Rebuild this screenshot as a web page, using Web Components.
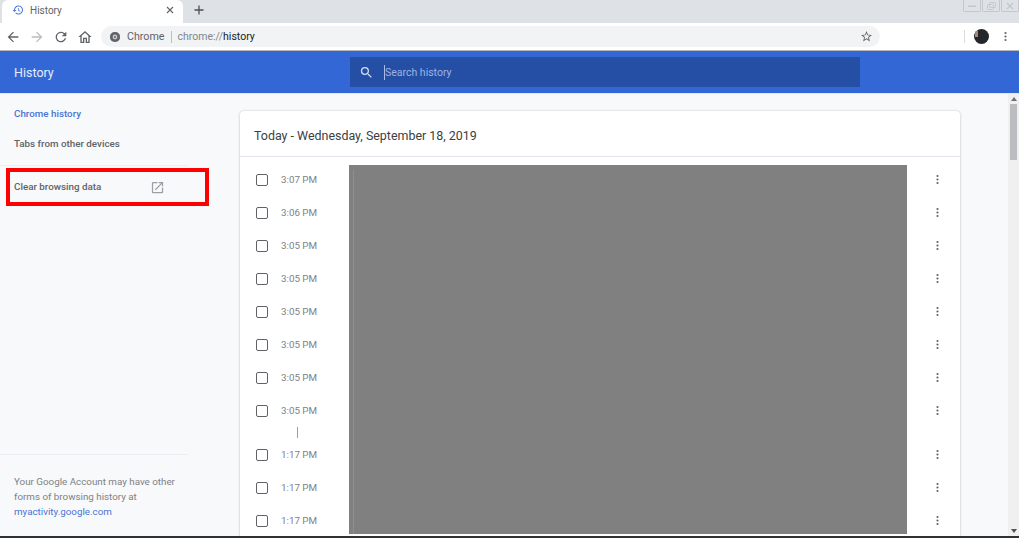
<!DOCTYPE html>
<html>
<head>
<meta charset="utf-8">
<title>History</title>
<style>
html, body { margin: 0; padding: 0; height: 100%; overflow: hidden; background: #fff; }
body { font-family: Roboto, "Liberation Sans", sans-serif; }
</style>
</head>
<body>
<history-page></history-page>

<script>
const ICONS = {
    history: '<path d="M13 3a9 9 0 0 0-9 9H1l4 4 4-4H6a7 7 0 1 1 2 4.9l-1.4 1.4A9 9 0 1 0 13 3zm-1 5v5l4.3 2.5.7-1.2-3.5-2.1V8z"/>',
    back: '<path d="M20 11H7.8l5.6-5.6L12 4l-8 8 8 8 1.4-1.4L7.8 13H20z"/>',
    forward: '<path d="M4 11h12.2l-5.6-5.6L12 4l8 8-8 8-1.4-1.4 5.6-5.6H4z"/>',
    reload: '<path d="M17.65 6.35A8 8 0 1 0 19.73 14h-2.08A6 6 0 1 1 12 6c1.66 0 3.14.69 4.22 1.78L13 11h7V4z"/>',
    home: '<path d="M12 3 2 12h3v9h6v-6h2v6h6v-9h3zm5 16h-2v-6H9v6H7v-8.8l5-4.5 5 4.5z"/>',
    star: '<path d="m22 9.2-7.2-.6L12 2 9.2 8.6 2 9.2l5.5 4.7L5.8 21l6.2-3.7 6.2 3.7-1.6-7.1zm-10 6-3.8 2.3 1-4.3-3.3-2.9 4.4-.4L12 5.9l1.7 4 4.4.4-3.3 2.9 1 4.3z"/>',
    search: '<path d="M15.5 14h-.79l-.28-.27A6.47 6.47 0 0 0 16 9.5 6.5 6.5 0 1 0 9.5 16c1.61 0 3.09-.59 4.23-1.57l.27.28v.79l5 4.99L20.49 19l-4.99-5zm-6 0C7.01 14 5 11.99 5 9.5S7.01 5 9.5 5 14 7.01 14 9.5 11.99 14 9.5 14z"/>',
    launch: '<path d="M19 19H5V5h7V3H5a2 2 0 0 0-2 2v14c0 1.1.9 2 2 2h14a2 2 0 0 0 2-2v-7h-2zM14 3v2h3.6l-9.8 9.8 1.4 1.4L19 6.4V10h2V3z"/>',
    more: '<circle cx="12" cy="5.5" r="2"/><circle cx="12" cy="12" r="2"/><circle cx="12" cy="18.5" r="2"/>'
};

function icon(name, size, color) {
    return `<svg xmlns="http://www.w3.org/2000/svg" width="${size}" height="${size}" viewBox="0 0 24 24" fill="${color}" style="display:block;flex:none">${ICONS[name]}</svg>`;
}

class BrowserTabstrip extends HTMLElement {
    constructor() {
        super();
        this.attachShadow({mode: 'open'});
        this.shadowRoot.innerHTML = `<style>
:host { display: flex; height: 23px; width: 1019px; background: #dee1e6; padding-left: 2px; box-sizing: border-box; position: relative; }
.tab { width: 181px; height: 23px; background: #fff; border-radius: 6px 6px 0 0; display: flex; align-items: center; padding: 0 9px 3px 10px; box-sizing: border-box; font-size: 10px; color: #5f6368; }
.tab span { flex: 1; margin-left: 6px; }
.plus { width: 32px; padding-bottom: 3px; box-sizing: border-box; display: flex; align-items: center; justify-content: center; }
.win { position: absolute; top: 0; right: 0; display: flex; gap: 1px; }
.win div { width: 18px; height: 12px; border: 1px solid #c4c7cb; border-top: 0; border-radius: 0 0 2px 2px; display: flex; align-items: center; justify-content: center; box-sizing: border-box; }
</style>
<div class="tab">
    ${icon('history', 12, '#4f78d8')}
    <span>History</span>
    <svg width="8" height="8" viewBox="0 0 8 8" stroke="#5f6368" stroke-width="1.1"><path d="M1 1l6 6M7 1L1 7"/></svg>
</div>
<div class="plus"><svg width="10" height="10" viewBox="0 0 10 10" stroke="#4d5156" stroke-width="1.3"><path d="M5 .5v9M.5 5h9"/></svg></div>
<div class="win">
    <div><svg width="8" height="4" viewBox="0 0 8 4" fill="#c4c7cb"><rect y="1.5" width="8" height="1.5"/></svg></div>
    <div><svg width="9" height="8" viewBox="0 0 9 8" fill="none" stroke="#c4c7cb"><rect x=".5" y="2.5" width="6" height="5" rx="1"/><rect x="2.5" y=".5" width="6" height="5" rx="1"/></svg></div>
    <div><svg width="8" height="8" viewBox="0 0 8 8" stroke="#c4c7cb" stroke-width="1.4"><path d="M1 1l6 6M7 1L1 7"/></svg></div>
</div>`;
    }
}

class BrowserToolbar extends HTMLElement {
    constructor() {
        super();
        this.attachShadow({mode: 'open'});
        this.shadowRoot.innerHTML = `<style>
:host { display: flex; align-items: center; height: 28px; width: 1019px; background: #fff; border-bottom: 1px solid #b4b6b9; box-sizing: border-box; padding-left: 5px; }
.btn { width: 16px; display: flex; justify-content: center; margin-right: 8px; }
.omni { width: 779px; height: 21px; flex: none; background: #f1f3f4; border-radius: 11px; display: flex; align-items: center; padding: 0 7px 0 9px; box-sizing: border-box; font-size: 10.5px; color: #80868b; }
.omni .site { width: 10px; height: 10px; border-radius: 50%; background: #5f6368; box-shadow: inset 0 0 0 2.6px #5f6368, inset 0 0 0 4px #c8cacc; flex: none; }
.omni .chrome { color: #5f6368; margin-left: 7px; font-size: 10.7px; }
.omni .sep { width: 1px; height: 12px; background: #bdc1c6; margin: 0 6px; }
.omni b { font-weight: 400; color: #202124; }
.omni .url { flex: 1; }
.sepv { width: 1px; height: 13px; background: #dadce0; margin-left: 84px; flex: none; }
.avatar { width: 15px; height: 15px; border-radius: 50%; background: #23262b; margin-left: 9px; position: relative; overflow: hidden; flex: none; }
.avatar::before { content: ""; position: absolute; left: 1px; top: 2px; width: 3px; height: 6px; background: #a58a7c; }
.menu { margin-left: 10px; }
</style>
<div class="btn">${icon('back', 16, '#5f6368')}</div>
<div class="btn">${icon('forward', 16, '#b9bcc0')}</div>
<div class="btn">${icon('reload', 16, '#5f6368')}</div>
<div class="btn">${icon('home', 16, '#5f6368')}</div>
<div class="omni">
    <div class="site"></div>
    <span class="chrome">Chrome</span>
    <div class="sep"></div>
    <span class="url">chrome://<b>history</b></span>
    ${icon('star', 13, '#5f6368')}
</div>
<div class="sepv"></div>
<div class="avatar"></div>
<div class="menu">${icon('more', 13, '#5f6368')}</div>`;
    }
}

class HistoryToolbar extends HTMLElement {
    constructor() {
        super();
        this.attachShadow({mode: 'open'});
        this.shadowRoot.innerHTML = `<style>
:host { display: flex; align-items: center; height: 43px; width: 1019px; background: #3367d6; border-bottom: 1px solid #e6e8ec; box-sizing: border-box; color: #fff; }
.title { width: 350px; padding-left: 14px; box-sizing: border-box; font-size: 12.5px; color: #e6ecfa; }
.search { width: 510px; height: 30px; background: #254fa5; display: flex; align-items: center; padding-left: 9px; box-sizing: border-box; }
.caret { width: 1px; height: 15px; background: #a9bde8; margin-left: 10px; }
.ph { font-size: 10.5px; color: #9db3e4; }
</style>
<div class="title">History</div>
<div class="search">
    ${icon('search', 15, '#d5def4')}
    <div class="caret"></div>
    <span class="ph">Search history</span>
</div>`;
    }
}

class SideNav extends HTMLElement {
    constructor() {
        super();
        this.attachShadow({mode: 'open'});
        this.shadowRoot.innerHTML = `<style>
:host { display: flex; flex-direction: column; width: 240px; flex: none; font-size: 9.8px; font-weight: 500; color: #5f6368; box-sizing: border-box; }
.item { padding-left: 14px; line-height: 12px; }
.active { color: #4a74d4; margin-top: 14px; }
.tabs { margin-top: 18px; }
.rule { height: 1px; width: 188px; background: #eceef1; }
.rule.top { margin-top: 15px; }
.clear { margin: 2px 0 0 6px; width: 203px; height: 38px; border: 4px solid #ff0000; box-sizing: border-box; display: flex; align-items: center; padding-left: 4px; }
.clear span { width: 136px; margin-bottom: 2px; }
.spacer { flex: 1; }
.foot { padding: 19px 0 0 14px; font-size: 9.8px; font-weight: 400; line-height: 15px; color: #7d8186; height: 81px; box-sizing: border-box; }
.foot a { color: #4a74d4; text-decoration: none; }
</style>
<div class="item active">Chrome history</div>
<div class="item tabs">Tabs from other devices</div>
<div class="rule top"></div>
<div class="clear"><span>Clear browsing data</span>${icon('launch', 15, '#9b9ea3')}</div>
<div class="spacer"></div>
<div class="rule"></div>
<div class="foot">Your Google Account may have other<br>forms of browsing history at<br><a href="#">myactivity.google.com</a></div>`;
    }
}

class HistoryRow extends HTMLElement {
    constructor() {
        super();
        this.attachShadow({mode: 'open'});
        this.shadowRoot.innerHTML = `<style>
:host { display: flex; align-items: center; height: 33px; padding-left: 16px; font-size: 9.8px; color: #7d8186; }
.check { width: 12px; height: 12px; border: 1.5px solid #5f6368; border-radius: 2px; box-sizing: border-box; margin-right: 13px; }
</style>
<div class="check"></div><slot></slot>`;
    }
}

class HistoryCard extends HTMLElement {
    constructor() {
        super();
        this.attachShadow({mode: 'open'});
        const times = ['3:07 PM', '3:06 PM', '3:05 PM', '3:05 PM', '3:05 PM', '3:05 PM', '3:05 PM', '3:05 PM'];
        const later = ['1:17 PM', '1:17 PM', '1:17 PM'];
        const row = t => `<history-row>${t}</history-row>`;
        const kebab = `<div class="kebab">${icon('more', 13, '#5f6368')}</div>`;
        this.shadowRoot.innerHTML = `<style>
:host { display: block; width: 720px; height: 425px; background: #fff; border-radius: 4px 4px 0 0; box-shadow: 0 0 2px rgba(60,64,67,.25), 0 1px 3px rgba(60,64,67,.12); overflow: hidden; flex: none; }
.head { height: 46px; padding: 3px 0 0 14px; display: flex; align-items: center; font-size: 12.45px; color: #3c4043; border-bottom: 1px solid #e4e5ea; box-sizing: border-box; }
.body { display: flex; }
.rows { width: 109px; flex: none; padding-top: 6px; }
.gap { height: 11px; display: flex; align-items: center; }
.gap::before { content: ""; width: 1px; height: 11px; background: #9aa0a6; margin-left: 57px; }
.blank { width: 558px; height: 369px; margin-top: 8px; flex: none; background: #808080; position: relative; }
.blank::before { content: ""; position: absolute; left: 4px; top: 5px; bottom: 0; width: 1px; background: #8f8f8f; }
.kebabs { flex: 1; padding: 6px 0 0 24px; }
.kebab { height: 33px; display: flex; align-items: center; }
.kgap { height: 11px; }
</style>
<div class="head">Today - Wednesday, September 18, 2019</div>
<div class="body">
    <div class="rows">
        ${times.map(row).join('')}
        <div class="gap"></div>
        ${later.map(row).join('')}
    </div>
    <div class="blank"></div>
    <div class="kebabs">
        ${kebab.repeat(8)}
        <div class="kgap"></div>
        ${kebab.repeat(3)}
    </div>
</div>`;
    }
}

class PageScrollbar extends HTMLElement {
    constructor() {
        super();
        this.attachShadow({mode: 'open'});
        this.shadowRoot.innerHTML = `<style>
:host { display: flex; flex-direction: column; align-items: center; width: 11px; background: #f0f0f0; flex: none; }
.arrow { height: 10px; display: flex; align-items: center; justify-content: center; flex: none; }
.thumb { width: 7px; height: 56px; background: #bcbdc1; flex: none; }
.track { flex: 1; }
</style>
<div class="arrow"><svg width="6" height="4" viewBox="0 0 6 4" fill="#6f7175"><path d="M3 0l3 4H0z"/></svg></div>
<div class="thumb"></div>
<div class="track"></div>
<div class="arrow"><svg width="6" height="4" viewBox="0 0 6 4" fill="#505256"><path d="M3 4l3-4H0z"/></svg></div>`;
    }
}

class HistoryPage extends HTMLElement {
    constructor() {
        super();
        this.attachShadow({mode: 'open'});
        this.shadowRoot.innerHTML = `<style>
:host { display: flex; flex-direction: column; width: 1024px; height: 538px; overflow: hidden; background: #fff; }
.main { display: flex; width: 1019px; height: 442px; background: #f8f9fa; flex: none; }
.center { flex: 1; padding-top: 17px; min-width: 0; }
.bottom { height: 2px; width: 1019px; background: #2f3135; flex: none; }
</style>
<browser-tabstrip></browser-tabstrip>
<browser-toolbar></browser-toolbar>
<history-toolbar></history-toolbar>
<div class="main">
    <side-nav></side-nav>
    <div class="center"><history-card></history-card></div>
    <page-scrollbar></page-scrollbar>
</div>
<div class="bottom"></div>`;
    }
}

customElements.define('browser-tabstrip', BrowserTabstrip);
customElements.define('browser-toolbar', BrowserToolbar);
customElements.define('history-toolbar', HistoryToolbar);
customElements.define('side-nav', SideNav);
customElements.define('history-row', HistoryRow);
customElements.define('history-card', HistoryCard);
customElements.define('page-scrollbar', PageScrollbar);
customElements.define('history-page', HistoryPage);
</script>
</body>
</html>
